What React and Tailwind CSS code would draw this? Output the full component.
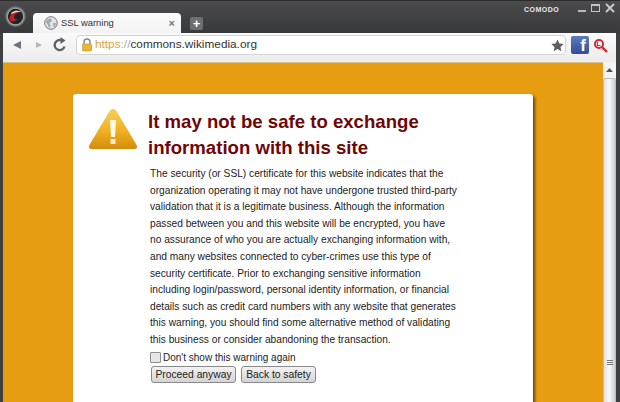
import React from "react";

const F = { fontFamily: '"Liberation Sans", Arial, sans-serif' };

function Logo() {
  return (
    <svg width="21" height="21" viewBox="0 0 20 20">
      <circle cx="10" cy="10" r="9.7" fill="#77787a" />
      <circle cx="10" cy="10" r="7.8" fill="#232323" stroke="#a5a5a5" strokeWidth="1" />
      <path d="M4 12 C6 6 11 4 15.5 5.5 C12 6 9.5 7.5 8.5 10 C8 12 9.5 13 11.5 12.5 C9.5 15.5 5 15.5 4 12Z" fill="#c8202a" />
      <path d="M6 6.5 C9 4 13 4 15.5 5.5 C11.5 5 8.5 6 6 8Z" fill="#e8e8e8" />
    </svg>
  );
}

function Globe() {
  return (
    <svg width="14" height="14" viewBox="0 0 14 14">
      <circle cx="7" cy="7" r="6.3" fill="#e2e5e7" stroke="#777" strokeWidth="1" />
      <path d="M3 3.5 L7 2.5 L8 5 L5.5 7 L6.5 10 L5 12 L3.5 8 L2 6.5Z M9 7 L12 7 L11 11 L9.5 11Z" fill="#a3a7aa" />
    </svg>
  );
}

function Warning() {
  return (
    <svg width="50" height="42" viewBox="0 0 50 42">
      <defs>
        <linearGradient id="tri" x1="0" y1="0" x2="0" y2="1">
          <stop offset="0" stopColor="#f7d15a" />
          <stop offset="0.55" stopColor="#f0b020" />
          <stop offset="1" stopColor="#d28d0c" />
        </linearGradient>
      </defs>
      <path d="M25 1 C27 1 28 2 29 4 L48 36 C50 39 49 41 46 41 L4 41 C1 41 0 39 2 36 L21 4 C22 2 23 1 25 1Z" fill="url(#tri)" />
      <path d="M22 12 L28 12 L27 29 L23 29Z" fill="#fdf9ea" />
      <rect x="22.5" y="31" width="5" height="5" fill="#f6eecb" />
    </svg>
  );
}

const LINES = [
  "The security (or SSL) certificate for this website indicates that the",
  "organization operating it may not have undergone trusted third-party",
  "validation that it is a legitimate business. Although the information",
  "passed between you and this website will be encrypted, you have",
  "no assurance of who you are actually exchanging information with,",
  "and many websites connected to cyber-crimes use this type of",
  "security certificate. Prior to exchanging sensitive information",
  "including login/password, personal identity information, or financial",
  "details such as credit card numbers with any website that generates",
  "this warning, you should find some alternative method of validating",
  "this business or consider abandoning the transaction.",
];

export default function App() {
  const btn = "h-[17px] rounded-[3px] border border-[#8a8a8a] bg-gradient-to-b from-[#f3f3f3] to-[#d4d4d4] text-[10.3px] leading-[15px] text-[#222] whitespace-nowrap";
  return (
    <div className="w-[620px] h-[402px] overflow-hidden flex flex-col bg-[#3e3f41]" style={F}>
      {/* title bar */}
      <div className="h-[33px] shrink-0 flex items-end bg-gradient-to-b from-[#4b4b4c] to-[#38393b] border-t border-t-[#2c2c2c] relative">
        <div className="self-start mt-[5px] ml-[5px] w-[21px]"><Logo /></div>
        <div className="ml-[7px] w-[148px] h-[20px] bg-gradient-to-b from-[#fbfbfb] to-[#f2f2f2] rounded-t-[4px] flex items-center pl-[11px] pr-[6px]">
          <Globe />
          <span className="ml-[3px] flex-1 text-[9.4px] text-[#333]">SSL warning</span>
          <span className="text-[11px] leading-none text-[#777] font-bold">×</span>
        </div>
        <div className="ml-[9px] mb-[3px] w-[13px] h-[13px] bg-[#6d6e70] rounded-[2px] flex items-center justify-center text-white text-[13px] font-bold leading-none">+</div>
        <span className="absolute left-[524px] top-[4px] text-[7px] font-bold tracking-[0.5px] text-[#e8e8e8]">COMODO</span>
        <div className="absolute left-[578px] top-[2px] flex items-center gap-[5px]">
          <div className="w-[8px] h-[2px] mt-[6px] bg-[#b9b9b9]" />
          <div className="w-[9px] h-[8px] border border-[#c4c4c4] border-t-2" />
          <svg width="10" height="10" viewBox="0 0 10 10"><path d="M1 1 L9 9 M9 1 L1 9" stroke="#c8c8c8" strokeWidth="2" /></svg>
        </div>
      </div>
      {/* toolbar */}
      <div className="h-[29px] shrink-0 flex items-start pt-[2px] bg-gradient-to-b from-[#fafafa] to-[#ececec] ml-[3px] mr-[4px] pr-[8px]">
        <svg width="10" height="10" viewBox="0 0 10 10" className="ml-[9px] mt-[5px]"><path d="M1 5 L9 1 L9 9Z" fill="#6f7376" /></svg>
        <svg width="8" height="8" viewBox="0 0 8 8" className="ml-[13px] mt-[6px]"><path d="M7 4 L1 1 L1 7Z" fill="#b2b4b6" /></svg>
        <svg width="14" height="15" viewBox="0 0 14 15" className="ml-[10px] mt-[2px]">
          <path d="M11.5 9.5 A5 5 0 1 1 8 3.2" fill="none" stroke="#5f6366" strokeWidth="2.4" />
          <path d="M7.5 0 L12.5 3.5 L7.5 7Z" fill="#5f6366" />
        </svg>
        <div className="ml-[9px] w-[490px] h-[20px] bg-white border border-[#d3d3d3] rounded-[4px] flex items-center pl-[4px] pr-[1px]">
          <svg width="12" height="14" viewBox="0 0 12 14">
            <path d="M3 6 V4 A3 3 0 0 1 9 4 V6" fill="none" stroke="#85878a" strokeWidth="1.4" />
            <rect x="1.5" y="6" width="9" height="7" rx="1" fill="#e9b63a" stroke="#b98a20" strokeWidth="0.6" />
          </svg>
          <span className="ml-[2px] flex-1 text-[11.8px] text-[#333]"><span className="text-[#e0a52c]">https</span><span className="text-[#aaa]">://</span>commons.wikimedia.org</span>
          <svg width="13" height="13" viewBox="0 0 24 24"><path d="M12 1 L15.4 8.4 L23.4 9.2 L17.4 14.6 L19.1 22.6 L12 18.5 L4.9 22.6 L6.6 14.6 L0.6 9.2 L8.6 8.4Z" fill="#5c5e61" /></svg>
        </div>
        <div className="ml-[5px] mt-[1px] w-[18px] h-[18px] rounded-[2px] bg-gradient-to-b from-[#5c7cc0] to-[#304f96] overflow-hidden flex items-end justify-end pr-[3px]">
          <span className="text-white font-bold text-[17px] leading-[17px]">f</span>
        </div>
        <svg width="15" height="15" viewBox="0 0 15 15" className="ml-[4px] mt-[3px]">
          <circle cx="6" cy="6" r="4" fill="#fff" stroke="#d8232a" strokeWidth="2" />
          <path d="M9 9 L14 14" stroke="#d8232a" strokeWidth="2.4" />
          <path d="M4.5 4 V7.5 H7.5" fill="none" stroke="#d8232a" strokeWidth="1.1" />
        </svg>
      </div>
      {/* body */}
      <div className="flex-1 min-h-0 flex pl-[3px] pr-[4px]">
        <div className="flex-1 bg-[#e79d12] border-t border-t-[#d9c48f] pt-[31px] pl-[70px] overflow-hidden">
          <div className="w-[460px] h-[400px] bg-white rounded-[3px] shadow-[2px_2px_3px_rgba(60,40,0,0.75)] flex pt-[15px]">
            <div className="w-[75px] shrink-0 pl-[15px] -mt-[1px]"><Warning /></div>
            <div>
              <h1 className="text-[18.6px] leading-[26px] font-bold text-[#6f0606]">
                It may not be safe to exchange<br />information with this site
              </h1>
              <div className="mt-[5px] ml-[2px] text-[10.2px] leading-[16.6px] text-[#222] whitespace-nowrap">
                {LINES.map((l) => <div key={l}>{l}</div>)}
              </div>
              <label className="mt-[2px] ml-[2px] flex items-center text-[10px] leading-[14px] text-[#222]">
                <span className="w-[11px] h-[11px] border border-[#8f8f8f] bg-[#e6e6e6] rounded-[1px] mr-[2px]" />
                Don't show this warning again
              </label>
              <div className="mt-[1px] ml-[3px] flex gap-[5px]">
                <button className={`${btn} w-[85px]`} style={F}>Proceed anyway</button>
                <button className={`${btn} w-[75px]`} style={F}>Back to safety</button>
              </div>
            </div>
          </div>
        </div>
        {/* scrollbar */}
        <div className="w-[13px] shrink-0 bg-[#f4f4f4] flex flex-col overflow-hidden">
          <div className="h-[16px] shrink-0 flex items-center justify-center">
            <svg width="7" height="4" viewBox="0 0 7 4"><path d="M3.5 0 L7 4 L0 4Z" fill="#555" /></svg>
          </div>
          <div className="flex-1 bg-gradient-to-r from-[#e0e0e0] via-[#f8f8f8] to-[#cdcdcd] border-x border-t border-[#bdbdbd] rounded-t-[2px] flex flex-col items-center gap-[1px] pt-[281px]">
            <div className="w-[6px] h-px bg-[#777]" />
            <div className="w-[6px] h-px bg-[#777]" />
            <div className="w-[6px] h-px bg-[#777]" />
          </div>
        </div>
      </div>
    </div>
  );
}
